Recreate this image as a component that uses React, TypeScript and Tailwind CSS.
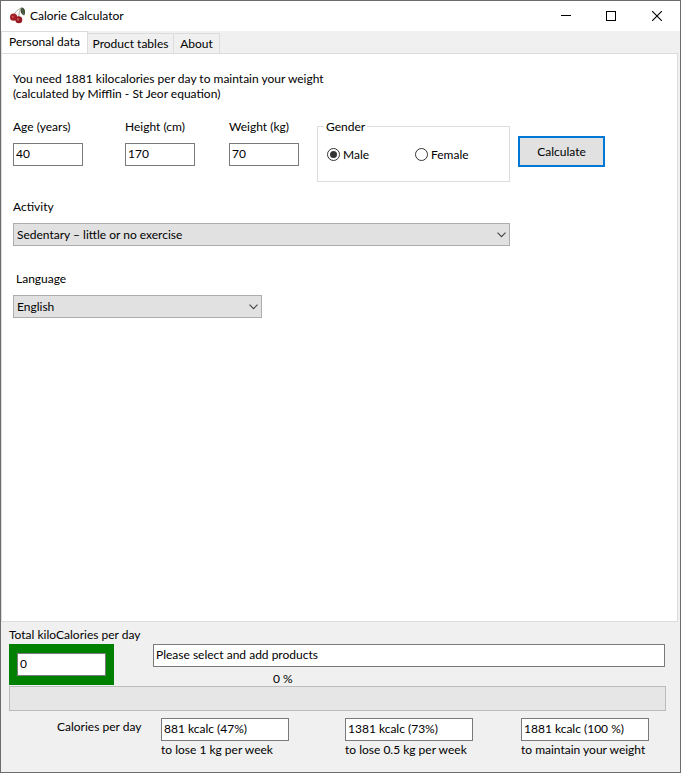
import React, { useState } from 'react';

interface FieldProps {
  label: string;
  id: string;
  defaultValue: string;
}

const goals = [
  { id: 'goal-fast', value: '881 kcalc (47%)', caption: 'to lose 1 kg per week', column: 'w-[184px]' },
  { id: 'goal-slow', value: '1381 kcalc (73%)', caption: 'to lose 0.5 kg per week', column: 'w-[176px]' },
  { id: 'goal-keep', value: '1881 kcalc (100 %)', caption: 'to maintain your weight', column: 'w-[128px]' },
];

const inputClass = 'h-[23px] rounded-none border border-[#7a7a7a] bg-white px-[2px] pb-[2px] outline-none';

const CherryIcon: React.FC = () => (
  <svg width="18" height="18" viewBox="0 0 18 18" aria-hidden="true">
    <path d="M13.2 0.6 C16.4 0.4 18.2 4 16.2 8.6 C13.2 7.8 11.6 3.8 13.2 0.6Z" fill="#34462f" />
    <path d="M14 1.6 C14.9 4 15.3 6 15.6 8" fill="none" stroke="#7d8c74" strokeWidth="0.6" />
    <path d="M5.4 9 C7 5 9.6 2.4 13.2 1.2 M10.6 11 C10.8 7 11.6 4 13.2 1.2" fill="none" stroke="#9aa08c" strokeWidth="0.9" />
    <circle cx="5.6" cy="10.2" r="3.6" fill="#a51f26" />
    <circle cx="10.8" cy="12.8" r="3.5" fill="#951a22" />
    <circle cx="4.8" cy="9.8" r="1.1" fill="#c95053" />
    <circle cx="10" cy="12.4" r="1.1" fill="#d05f60" />
  </svg>
);

const TitleBar: React.FC = () => (
  <header className="flex h-[30px] items-center bg-white pl-[7px]">
    <CherryIcon />
    <h1 className="grow pb-[2px] pl-1">Calorie Calculator</h1>
    <button type="button" aria-label="Minimize" className="flex h-full w-[45px] items-center justify-center">
      <svg width="10" height="10" viewBox="0 0 10 10" shapeRendering="crispEdges">
        <path d="M0 4.5H10" stroke="#000" />
      </svg>
    </button>
    <button type="button" aria-label="Maximize" className="flex h-full w-[46px] items-center justify-center">
      <svg width="10" height="10" viewBox="0 0 10 10" shapeRendering="crispEdges">
        <path d="M0.5 0.5H9.5V9.5H0.5Z" fill="none" stroke="#000" />
      </svg>
    </button>
    <button type="button" aria-label="Close" className="flex h-full w-[46px] items-center justify-center">
      <svg width="10" height="10" viewBox="0 0 10 10">
        <path d="M0 0L10 10M10 0L0 10" stroke="#000" strokeWidth="1.1" />
      </svg>
    </button>
  </header>
);

const NumberField: React.FC<FieldProps> = ({ label, id, defaultValue }) => (
  <div className="flex w-[70px] flex-col gap-[9px]">
    <label htmlFor={id} className="whitespace-nowrap">{label}</label>
    <input id={id} type="text" defaultValue={defaultValue} className={`${inputClass} w-full`} />
  </div>
);

const Dropdown: React.FC<{ id: string; options: string[] }> = ({ id, options }) => (
  <div className="relative">
    <select
      id={id}
      className="block h-[23px] w-full appearance-none rounded-none border border-[#adadad] bg-[#e1e1e1] pr-5 pl-[3px] outline-none"
    >
      {options.map((option) => (
        <option key={option}>{option}</option>
      ))}
    </select>
    <svg width="9" height="6" viewBox="0 0 9 6" className="pointer-events-none absolute top-[9px] right-1">
      <path d="M0.5 0.7L4.5 4.7L8.5 0.7" fill="none" stroke="#444" strokeWidth="1.1" />
    </svg>
  </div>
);

const GenderOption: React.FC<{ value: string; checked: boolean; onChange: (value: string) => void }> = ({
  value,
  checked,
  onChange,
}) => (
  <label className="flex w-[88px] items-center gap-[3px]">
    <input
      type="radio"
      name="gender"
      value={value}
      checked={checked}
      onChange={() => onChange(value)}
      className="grid size-[13px] appearance-none place-content-center rounded-full border border-[#333] bg-white before:size-[7px] before:rounded-full checked:before:bg-[#333]"
    />
    {value}
  </label>
);

const PersonalData: React.FC = () => {
  const [gender, setGender] = useState('Male');

  return (
    <form className="px-[11px] pt-[17px]" onSubmit={(e) => e.preventDefault()}>
      <p>
        You need 1881 kilocalories per day to maintain your weight
        <br />
        (calculated by Mifflin - St Jeor equation)
      </p>

      <div className="mt-[18px] flex items-start">
        <NumberField id="age" label="Age (years)" defaultValue="40" />
        <div className="ml-[42px]">
          <NumberField id="height" label="Height (cm)" defaultValue="170" />
        </div>
        <div className="ml-[34px]">
          <NumberField id="weight" label="Weight (kg)" defaultValue="70" />
        </div>
        <fieldset className="ml-[18px] h-[63px] w-[193px] border border-[#dcdcdc] pl-[9px]">
          <legend className="px-[2px] -ml-[3px]">Gender</legend>
          <div className="flex pt-[13px]">
            <GenderOption value="Male" checked={gender === 'Male'} onChange={setGender} />
            <GenderOption value="Female" checked={gender === 'Female'} onChange={setGender} />
          </div>
        </fieldset>
        <button type="submit" className="mt-[17px] ml-2 h-[31px] w-[87px] border-2 border-[#0078d7] bg-[#e1e1e1]">
          Calculate
        </button>
      </div>

      <div className="mt-[17px] flex max-w-[497px] flex-col gap-[9px]">
        <label htmlFor="activity">Activity</label>
        <Dropdown
          id="activity"
          options={['Sedentary – little or no exercise', 'Light exercise', 'Moderate exercise', 'Heavy exercise']}
        />
      </div>

      <div className="mt-[25px] flex max-w-[249px] flex-col gap-[9px]">
        <label htmlFor="language" className="pl-[3px]">Language</label>
        <Dropdown id="language" options={['English', 'Deutsch', 'Русский']} />
      </div>
    </form>
  );
};

const Summary: React.FC = () => (
  <footer className="pt-[5px] pr-[14px] pb-[15px] pl-2">
    <label htmlFor="total">Total kiloCalories per day</label>
    <div className="mt-[2px] flex items-start gap-[39px]">
      <div className="flex h-[41px] w-[105px] items-center justify-center bg-[#008000]">
        <input id="total" type="text" readOnly value="0" className={`${inputClass} w-[89px]`} />
      </div>
      <div className="flex grow flex-col gap-1 pr-px">
        <input
          type="text"
          aria-label="Status"
          readOnly
          value="Please select and add products"
          className={`${inputClass} w-full`}
        />
        <span className="pl-[120px]">0 %</span>
      </div>
    </div>
    <div
      role="progressbar"
      aria-label="Calories eaten"
      aria-valuenow={0}
      className="h-[25px] border border-[#bcbcbc] bg-[#e6e6e6]"
    />
    <div className="mt-[7px] flex items-start pl-12">
      <span className="w-[104px] pt-px whitespace-nowrap">Calories per day</span>
      {goals.map((goal) => (
        <div key={goal.id} className={`flex flex-col gap-px ${goal.column}`}>
          <input id={goal.id} type="text" readOnly value={goal.value} className={`${inputClass} w-[128px]`} />
          <label htmlFor={goal.id} className="whitespace-nowrap">{goal.caption}</label>
        </div>
      ))}
    </div>
  </footer>
);

export default function App() {
  return (
    <div className="flex min-h-screen flex-col border border-[#6d6b6c] bg-[#f0f0f0] font-['Lato','Noto_Sans',sans-serif] text-[12px] leading-[15px] text-black">
      <TitleBar />
      <div role="tablist" className="flex items-end">
        <button
          type="button"
          role="tab"
          aria-selected="true"
          className="-mb-px h-[23px] w-[87px] border border-b-0 border-[#dcdcdc] bg-white pb-1 whitespace-nowrap"
        >
          Personal data
        </button>
        <button
          type="button"
          role="tab"
          aria-selected="false"
          className="h-5 w-[86px] border border-b-0 border-l-0 border-[#dcdcdc] whitespace-nowrap"
        >
          Product tables
        </button>
        <button
          type="button"
          role="tab"
          aria-selected="false"
          className="h-5 w-[46px] border border-b-0 border-l-0 border-[#dcdcdc] whitespace-nowrap"
        >
          About
        </button>
      </div>
      <main role="tabpanel" className="mr-[2px] grow border border-[#dcdcdc] bg-white">
        <PersonalData />
      </main>
      <Summary />
    </div>
  );
}
